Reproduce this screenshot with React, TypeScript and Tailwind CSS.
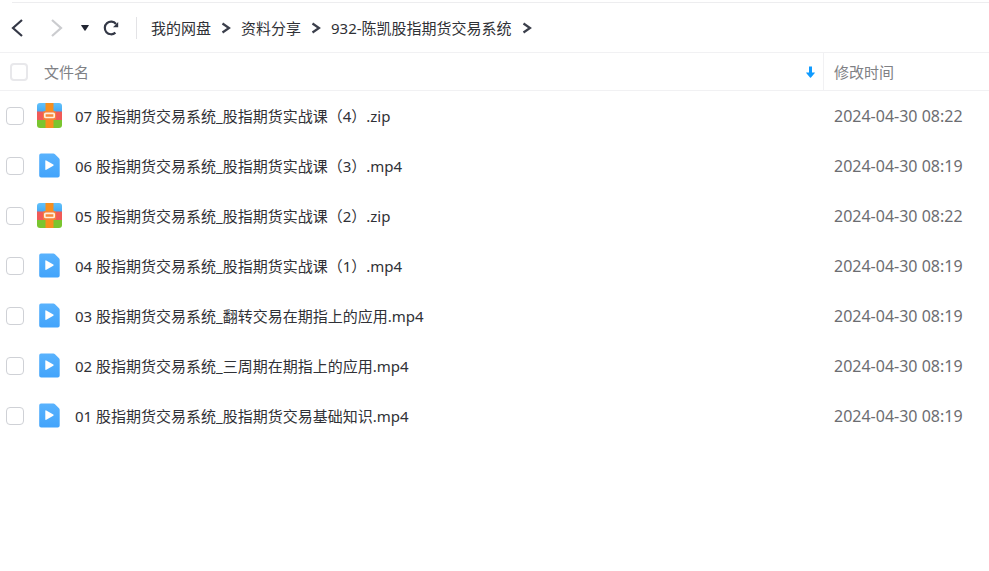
type FileItem = {
  name: string;
  kind: 'zip' | 'video';
  modified: string;
};

const files: FileItem[] = [
  { name: '07 股指期货交易系统_股指期货实战课（4）.zip', kind: 'zip', modified: '2024-04-30 08:22' },
  { name: '06 股指期货交易系统_股指期货实战课（3）.mp4', kind: 'video', modified: '2024-04-30 08:19' },
  { name: '05 股指期货交易系统_股指期货实战课（2）.zip', kind: 'zip', modified: '2024-04-30 08:22' },
  { name: '04 股指期货交易系统_股指期货实战课（1）.mp4', kind: 'video', modified: '2024-04-30 08:19' },
  { name: '03 股指期货交易系统_翻转交易在期指上的应用.mp4', kind: 'video', modified: '2024-04-30 08:19' },
  { name: '02 股指期货交易系统_三周期在期指上的应用.mp4', kind: 'video', modified: '2024-04-30 08:19' },
  { name: '01 股指期货交易系统_股指期货交易基础知识.mp4', kind: 'video', modified: '2024-04-30 08:19' },
];

const crumbs = ['我的网盘', '资料分享', '932-陈凯股指期货交易系统'];

function ZipIcon() {
  return (
    <svg className="size-[26px] shrink-0" viewBox="0 0 26 26" aria-hidden="true">
      <defs>
        <clipPath id="zip-shape">
          <rect width="25" height="25" rx="3" />
        </clipPath>
        <linearGradient id="zip-blue" x1="0" y1="0" x2="0" y2="1">
          <stop offset="0" stopColor="#62c1fb" />
          <stop offset="1" stopColor="#45aaf2" />
        </linearGradient>
      </defs>
      <g clipPath="url(#zip-shape)">
        <rect width="25" height="9" fill="url(#zip-blue)" />
        <rect y="8.500" width="25" height="9" fill="#f05a57" />
        <rect y="17" width="25" height="9" fill="#7ac52f" />
        <rect x="8.500" width="8" height="26" fill="#f78f1e" />
        <rect x="6" y="8" width="13" height="9" rx="2" fill="#f5823a" />
        <rect x="7.800" y="10.300" width="9.400" height="4.200" rx="1" fill="#f58a3c" stroke="#ffeedd" strokeWidth="1.700" />
      </g>
    </svg>
  );
}

function VideoIcon() {
  return (
    <svg className="size-[26px] shrink-0" viewBox="0 0 26 26" aria-hidden="true">
      <defs>
        <linearGradient id="video-blue" x1="0" y1="0" x2="0" y2="1">
          <stop offset="0" stopColor="#59b2fd" />
          <stop offset="1" stopColor="#42a4fb" />
        </linearGradient>
      </defs>
      <path
        d="M4 .5h12.300q1 0 1.700.7l4 4q.7.700.7 1.700V22.600q0 2-2 2H4.200q-2 0-2-2V2.500Q2.200.5 4 .5Z"
        fill="url(#video-blue)"
      />
      <path d="M8.300 8q0-1.100 1-.6l7 4.100q.9.600 0 1.200l-7 4.100q-1 .5-1-.6Z" fill="#fff" />
    </svg>
  );
}

function CrumbArrow() {
  return (
    <svg className="mx-[10px] h-3 w-[10px] shrink-0" viewBox="0 0 10 12" fill="none" aria-hidden="true">
      <path d="M1.500 1.500 8 6 1.500 10.500" stroke="#3b3f4b" strokeWidth="2.200" />
    </svg>
  );
}

function Toolbar() {
  return (
    <header className="flex h-[50px] items-center pt-px">
      <button type="button" aria-label="后退" className="ml-2 flex h-6 w-[17px] items-center justify-center">
        <svg className="h-5 w-4" viewBox="0 0 16 20" fill="none" aria-hidden="true">
          <path d="M13 2 4 10l9 8" stroke="#343846" strokeWidth="2.200" />
        </svg>
      </button>
      <button
        type="button"
        aria-label="前进"
        disabled
        className="ml-[23px] flex h-6 w-[17px] items-center justify-center"
      >
        <svg className="h-5 w-4" viewBox="0 0 16 20" fill="none" aria-hidden="true">
          <path d="m3 2 9 8-9 8" stroke="#cbcccf" strokeWidth="2.200" />
        </svg>
      </button>
      <button type="button" aria-label="历史记录" className="ml-4 flex h-6 w-2 items-center justify-center">
        <svg className="h-[6px] w-2" viewBox="0 0 8 6" aria-hidden="true">
          <path d="M.5 0h7q.700 0 .3.600L4.500 5.500q-.5.600-1 0L.2.600Q-.2 0 .5 0Z" fill="#222633" />
        </svg>
      </button>
      <button type="button" aria-label="刷新" className="ml-[13px] flex size-[18px] items-center justify-center">
        <svg className="size-[18px]" viewBox="0 0 18 18" fill="none" aria-hidden="true">
          <path d="M13.400 13.600A6.300 6.300 0 1 1 14 5" stroke="#343846" strokeWidth="2.200" />
          <path d="M16.200 3v5.200h-5.200Z" fill="#343846" />
        </svg>
      </button>
      <div className="ml-4 h-[22px] w-px bg-[#e3e3e6]" />
      <nav aria-label="路径" className="ml-[14px] flex items-center whitespace-nowrap">
        {crumbs.map((crumb) => (
          <div key={crumb} className="flex items-center">
            <a href="#" className="text-[#303136]">
              {crumb}
            </a>
            <CrumbArrow />
          </div>
        ))}
      </nav>
    </header>
  );
}

export default function App() {
  return (
    <div className="min-h-screen bg-white pt-[2px] font-['Noto_Sans','Noto_Sans_CJK_SC',sans-serif] text-[15px] leading-5">
      <div className="ml-3 -mb-px h-px bg-[#ededef]" />
      <Toolbar />
      <table className="w-full table-fixed border-separate border-spacing-0 text-left">
        <thead>
          <tr className="h-[39px] text-[#808185]">
            <th scope="col" className="border-y border-r border-[#f1f1f3] p-0 pr-2 pl-[10px] font-normal">
              <div className="flex items-center">
                <input
                  type="checkbox"
                  aria-label="全选"
                  className="size-[18px] appearance-none rounded border-2 border-[#e8e8eb] bg-white checked:bg-sky-500"
                />
                <span className="ml-4">文件名</span>
                <svg className="ml-auto h-3 w-[9px]" viewBox="0 0 9 12" fill="#109bff" aria-label="降序">
                  <path d="M3 .5h3v6h2.500q.7 0 .3.600L5 11.500q-.5.600-1 0L.2 7.100q-.4-.6.300-.6H3Z" />
                </svg>
              </div>
            </th>
            <th scope="col" className="w-[165px] border-y border-[#f1f1f3] p-0 pl-[10px] font-normal">
              修改时间
            </th>
          </tr>
        </thead>
        <tbody>
          {files.map((file, index) => (
            <tr key={file.name} className="h-[50px]">
              <td className="p-0 pl-[6px]">
                <div className="flex items-center">
                  <input
                    id={`file-${index}`}
                    type="checkbox"
                    className="size-[18px] shrink-0 appearance-none rounded border border-[#cfd1d6] bg-white checked:bg-sky-500"
                  />
                  <label htmlFor={`file-${index}`} className="ml-[13px] flex items-center whitespace-nowrap text-[#303136]">
                    {file.kind === 'zip' ? <ZipIcon /> : <VideoIcon />}
                    <span className="ml-3">{file.name}</span>
                  </label>
                </div>
              </td>
              <td className="p-0 pl-[10px] text-base leading-5 whitespace-nowrap text-[#6c6d71]">{file.modified}</td>
            </tr>
          ))}
        </tbody>
      </table>
    </div>
  );
}
